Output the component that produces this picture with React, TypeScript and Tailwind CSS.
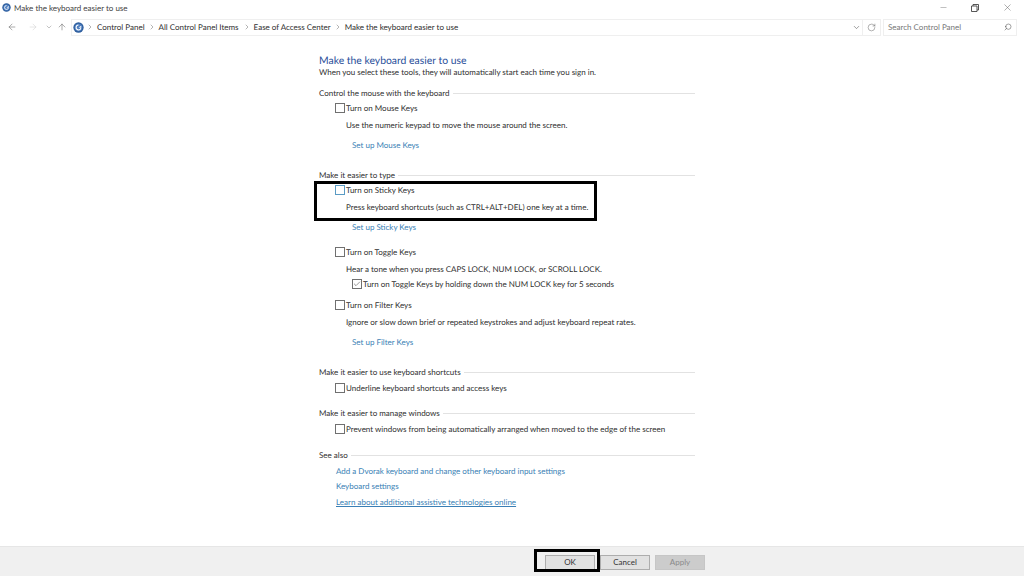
import React from 'react'
import { ArrowLeft, ArrowRight, ArrowUp, Check, ChevronDown, ChevronRight, Minus, RotateCw, Search, X } from 'lucide-react'

function CpIcon({ size }: { size: number }) {
  return (
    <svg width={size} height={size} viewBox="0 0 16 16" className="shrink-0">
      <circle cx="8" cy="8" r="7.5" fill="#2f5f9e" />
      <circle cx="8" cy="8" r="5.5" fill="#4f7fc0" />
      <path d="M8 4.5a3.5 3.5 0 1 0 3.4 4.4" fill="none" stroke="#ffffff" strokeWidth="1.5" />
      <path d="M8 8l4-2.5v3z" fill="#ffffff" />
    </svg>
  )
}

function Crumb({ label, gap }: { label: string; gap: string }) {
  return (
    <>
      <ChevronRight size={8} strokeWidth={1.5} className={`text-[#6b6b6b] ${gap}`} />
      <span className="ml-[3px] whitespace-nowrap">{label}</span>
    </>
  )
}

function Section({ title, className }: { title: string; className: string }) {
  return (
    <div className={`flex items-center h-[14px] w-[376px] ${className}`}>
      <span className="whitespace-nowrap text-[#2f2f2f]">{title}</span>
      <div className="ml-[3px] h-px grow bg-[#e2e2e2]" />
    </div>
  )
}

function CheckRow({ label, className, checked, focus }: { label: string; className: string; checked?: boolean; focus?: boolean }) {
  return (
    <div className={`flex items-center h-[14px] ${className}`}>
      <span className={`flex h-[8px] w-[8px] box-content items-center justify-center border bg-white ${focus ? 'border-[#5a9bc4]' : 'border-[#707070]'}`}>
        {checked && <Check size={8} strokeWidth={1.5} className="text-[#333333]" />}
      </span>
      <span className="ml-px whitespace-nowrap text-[#2f2f2f]">{label}</span>
    </div>
  )
}

function Desc({ children }: { children: string }) {
  return <div className="ml-[27px] mt-[3px] h-[14px] leading-[14px] whitespace-nowrap text-[#2f2f2f]">{children}</div>
}

function SetupLink({ children }: { children: string }) {
  return <div className="ml-[33px] mt-[6px] h-[14px] leading-[14px] whitespace-nowrap text-[#3a7fb5]">{children}</div>
}

export default function App() {
  return (
    <div className="relative flex h-[576px] w-[1024px] flex-col overflow-hidden bg-white text-[8px] font-['Lato',sans-serif] text-[#2f2f2f] [text-rendering:geometricPrecision]">
      {/* title bar */}
      <div className="flex h-[15px] shrink-0 items-center pl-[2px]">
        <CpIcon size={9} />
        <span className="ml-[3px] text-[#444444]">Make the keyboard easier to use</span>
        <div className="ml-auto flex items-center text-[#555555]">
          <Minus size={9} strokeWidth={1} className="mr-[23px]" />
          <svg width="8" height="8" viewBox="0 0 8 8" className="mr-[23px]">
            <path d="M.5 2h5.5v5.5H.5zM2 2V.5h5.5V6H6" fill="none" stroke="#444444" strokeWidth="0.9" />
          </svg>
          <X size={11} strokeWidth={1} className="mr-[11px]" />
        </div>
      </div>
      {/* nav bar */}
      <div className="mt-[3px] flex h-[18px] shrink-0 items-center">
        <ArrowLeft size={10} strokeWidth={1.3} className="ml-[7px] text-[#666666]" />
        <ArrowRight size={10} strokeWidth={1.3} className="ml-[11px] text-[#d0d0d0]" />
        <ChevronDown size={8} strokeWidth={1.5} className="ml-[7px] text-[#888888]" />
        <ArrowUp size={10} strokeWidth={1.3} className="ml-[4px] text-[#666666]" />
        <div className="ml-[4px] flex h-[17px] w-[792px] items-center border border-[#efefef] pl-[1px]">
          <CpIcon size={11} />
          <Crumb label="Control Panel" gap="ml-[2px]" />
          <Crumb label="All Control Panel Items" gap="ml-[3px]" />
          <Crumb label="Ease of Access Center" gap="ml-[4px]" />
          <Crumb label="Make the keyboard easier to use" gap="ml-[3px]" />
          <ChevronDown size={9} strokeWidth={1.5} className="ml-auto mr-[1px] text-[#555555]" />
        </div>
        <div className="flex h-[17px] w-[18px] items-center justify-center border-y border-r border-[#efefef]">
          <RotateCw size={9} strokeWidth={1.2} className="text-[#555555]" />
        </div>
        <div className="ml-[2px] flex h-[17px] w-[134px] items-center justify-between border border-[#efefef] px-[4px] text-[#777777]">
          <span>Search Control Panel</span>
          <Search size={8} strokeWidth={1.5} className="-scale-x-100 text-[#444444]" />
        </div>
      </div>
      {/* content */}
      <div className="ml-[319px] flex grow flex-col">
        <div className="mt-[17px] h-[16px] text-[10.4px] leading-[16px] text-[#2a4f9a]">Make the keyboard easier to use</div>
        <div className="mt-[-4px] h-[14px] leading-[14px] whitespace-nowrap">When you select these tools, they will automatically start each time you sign in.</div>

        <Section title="Control the mouse with the keyboard" className="mt-[7px]" />
        <CheckRow label="Turn on Mouse Keys" className="ml-[16px] mt-px" />
        <Desc>Use the numeric keypad to move the mouse around the screen.</Desc>
        <SetupLink>Set up Mouse Keys</SetupLink>

        <Section title="Make it easier to type" className="mt-[16px]" />
        <CheckRow label="Turn on Sticky Keys" className="ml-[16px] mt-px" focus />
        <Desc>Press keyboard shortcuts (such as CTRL+ALT+DEL) one key at a time.</Desc>
        <SetupLink>Set up Sticky Keys</SetupLink>

        <CheckRow label="Turn on Toggle Keys" className="ml-[16px] mt-[11px]" />
        <Desc>Hear a tone when you press CAPS LOCK, NUM LOCK, or SCROLL LOCK.</Desc>
        <CheckRow label="Turn on Toggle Keys by holding down the NUM LOCK key for 5 seconds" className="ml-[33px] mt-px" checked />
        <CheckRow label="Turn on Filter Keys" className="ml-[16px] mt-[7px]" />
        <Desc>Ignore or slow down brief or repeated keystrokes and adjust keyboard repeat rates.</Desc>
        <SetupLink>Set up Filter Keys</SetupLink>

        <Section title="Make it easier to use keyboard shortcuts" className="mt-[16px]" />
        <CheckRow label="Underline keyboard shortcuts and access keys" className="ml-[16px] mt-[2px]" />

        <Section title="Make it easier to manage windows" className="mt-[11px]" />
        <CheckRow label="Prevent windows from being automatically arranged when moved to the edge of the screen" className="ml-[16px] mt-[2px]" />

        <Section title="See also" className="mt-[12px]" />
        <div className="ml-[17px] mt-[2px] h-[14px] leading-[14px] text-[#3a7fb5]">Add a Dvorak keyboard and change other keyboard input settings</div>
        <div className="ml-[17px] mt-px h-[14px] leading-[14px] text-[#3a7fb5]">Keyboard settings</div>
        <div className="ml-[17px] mt-[2px] h-[14px] leading-[14px] text-[#3a7fb5] underline">Learn about additional assistive technologies online</div>
      </div>
      {/* footer */}
      <div className="flex h-[30px] shrink-0 items-center border-t border-[#e6e6e6] bg-[#f0f0f0] pl-[545px] pt-[1px]">
        <button className="h-[15px] w-[50px] border border-[#adadad] bg-[#e1e1e1] text-[#333333]">OK</button>
        <button className="ml-[5px] h-[15px] w-[50px] border border-[#adadad] bg-[#e1e1e1] text-[#333333]">Cancel</button>
        <button className="ml-[5px] h-[15px] w-[50px] border border-[#c6c6c6] bg-[#cccccc] text-[#8a8a8a]">Apply</button>
      </div>
      {/* annotation boxes */}
      <div className="absolute left-[314px] top-[181px] h-[40px] w-[283px] border-[3px] border-black" />
      <div className="absolute left-[534px] top-[549px] h-[23px] w-[66px] border-[3px] border-black" />
    </div>
  )
}
